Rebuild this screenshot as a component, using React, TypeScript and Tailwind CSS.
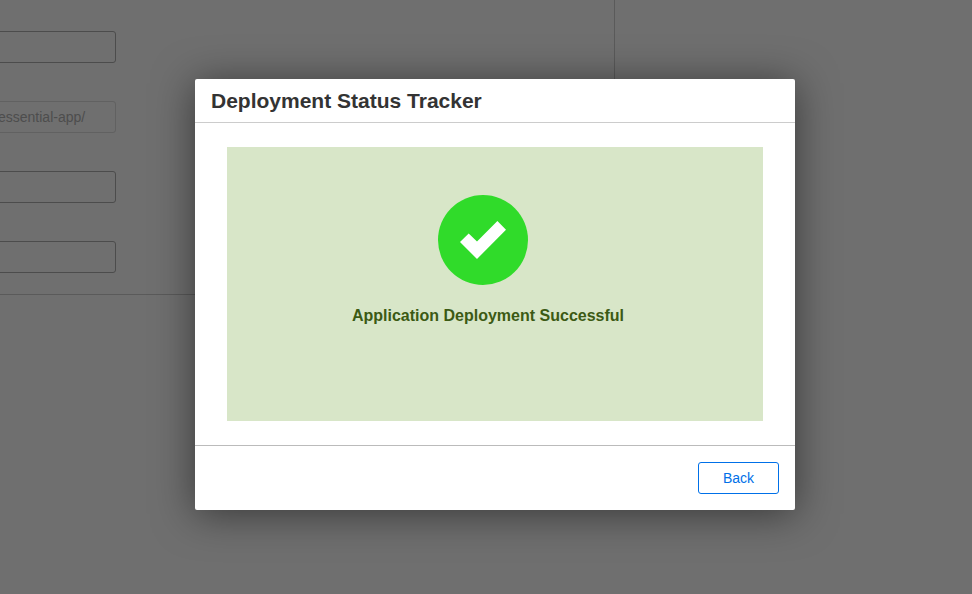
import React from "react";

function Field({ value = "", disabled = false }: { value?: string; disabled?: boolean }) {
  return (
    <div
      className={
        "flex h-8 w-[126px] -ml-[10px] items-center rounded-[3px] border pl-[7px] text-[14px] text-[#4d4d4d] " +
        (disabled ? "border-[#616161]" : "border-[#4c4c4c]")
      }
    >
      {value}
    </div>
  );
}

function Backdrop() {
  return (
    <div className="h-[594px] w-[972px] bg-[#6f6f6f]">
      <div className="flex h-[295px] w-[615px] flex-col gap-[38px] border-r border-b border-[#5a5a5a] pt-[31px]">
        <Field />
        <Field value="essential-app/" disabled />
        <Field />
        <Field />
      </div>
    </div>
  );
}

function SuccessIcon() {
  return (
    <svg width="90" height="90" viewBox="0 0 90 90" aria-hidden="true">
      <circle cx="45" cy="45" r="45" fill="#30db2a" />
      <path d="M22 47 30.7 38.4 39 46.4 59.4 26 68 34.7 39 64Z" fill="#fff" />
    </svg>
  );
}

export default function App() {
  return (
    <div className="relative h-[594px] w-[972px] overflow-hidden font-['Liberation_Sans',Arial,sans-serif]">
      <Backdrop />
      <div
        role="dialog"
        className="absolute top-[79px] left-[195px] flex h-[431px] w-[600px] flex-col rounded-[2px] bg-white shadow-[0_4px_40px_rgba(0,0,0,0.5)]"
      >
        <header className="flex h-11 shrink-0 items-center border-b border-[#ccc] px-4">
          <h2 className="text-[21px] leading-6 font-bold text-[#333]">Deployment Status Tracker</h2>
        </header>
        <main className="flex-1 px-8 py-6">
          <div className="flex h-[274px] flex-col items-center bg-[#d8e6c8] pt-12">
            <div className="mr-6">
              <SuccessIcon />
            </div>
            <p className="mt-[19px] mr-[14px] text-[16px] leading-6 font-bold text-[#3c5a14]">
              Application Deployment Successful
            </p>
          </div>
        </main>
        <footer className="flex h-[65px] shrink-0 items-start justify-end border-t border-[#bbb] px-4 pt-4">
          <button className="h-8 w-[81px] rounded-[3px] border border-[#0070e8] text-[14px] text-[#0070e8]">
            Back
          </button>
        </footer>
      </div>
    </div>
  );
}
